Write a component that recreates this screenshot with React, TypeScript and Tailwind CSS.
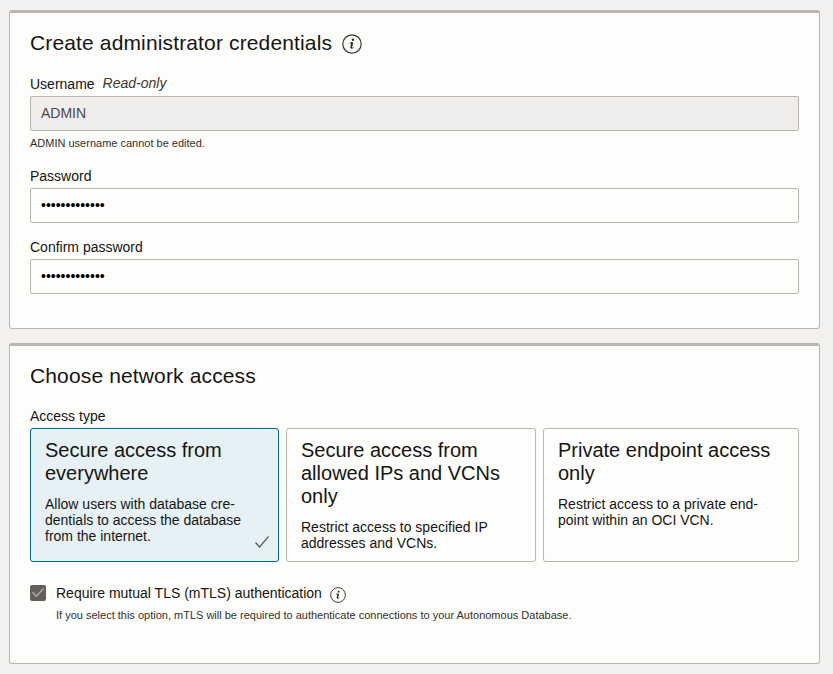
import React from "react";

function InfoIcon({ className }: { className: string }) {
  return (
    <svg viewBox="0 0 20 20" className={className} fill="none">
      <circle cx="10" cy="10" r="9.2" stroke="#3a3735" strokeWidth="1.2" />
      <circle cx="10.9" cy="5.8" r="1.2" fill="#2b2826" />
      <path d="M7.8 9.1 L10.4 8.6 L9.2 13.6 C9 14.8 10 14.7 11.6 13.2" stroke="#2b2826" strokeWidth="1" />
      <path d="M10.2 8.5 L9.1 13.8" stroke="#2b2826" strokeWidth="1.7" />
    </svg>
  );
}

function Panel({ className, children }: { className: string; children: React.ReactNode }) {
  return (
    <section
      className={`rounded-[3px] border border-t-[3px] border-[#bbb5af] bg-[#fdfdfb] pl-5 pr-5 ${className}`}
    >
      {children}
    </section>
  );
}

function PasswordField({ label, className }: { label: string; className: string }) {
  return (
    <div className={className}>
      <div className="h-5 text-sm leading-4">{label}</div>
      <div className="h-[35px] rounded-[2px] border border-[#bbb5af] pl-2.5 pt-2 text-sm leading-4 text-black">
        •••••••••••••
      </div>
    </div>
  );
}

function Card({
  title,
  lines,
  selected = false,
}: {
  title: string[];
  lines: string[];
  selected?: boolean;
}) {
  return (
    <div
      className={`relative rounded-[3px] border pl-3.5 pt-2.5 ${
        selected ? "border-[#00688c] bg-[#e5f1f4]" : "border-[#bbb5af]"
      }`}
    >
      <div className="text-xl leading-[23px]">
        {title.map((t) => (
          <div key={t} className="whitespace-nowrap">{t}</div>
        ))}
      </div>
      <div className="mt-[11px] text-sm leading-4">
        {lines.map((t) => (
          <div key={t} className="whitespace-nowrap">{t}</div>
        ))}
      </div>
      {selected && (
        <svg viewBox="0 0 16 14" className="absolute bottom-3 right-2 h-3.5 w-4" fill="none">
          <path d="M1.5 7.5 L5.6 12 L14.6 1.4" stroke="#55524f" strokeWidth="1.2" />
        </svg>
      )}
    </div>
  );
}

export default function App() {
  return (
    <main className="h-[674px] w-[833px] overflow-hidden bg-[#f2f1ef] pl-[9px] pt-2.5 font-['Liberation_Sans',Arial,sans-serif] text-[#161513]">
      <Panel className="h-[319px] w-[811px] pt-[18px]">
        <div className="flex h-6 items-center">
          <h2 className="text-[21px] leading-6 tracking-[0.14px]">Create administrator credentials</h2>
          <InfoIcon className="ml-2.5 mt-px h-5 w-5" />
        </div>
        <div className="mt-[21px] flex h-5 text-sm leading-4">
          <span>Username</span>
          <span className="-mt-px ml-2 italic text-[#3c3835]">Read-only</span>
        </div>
        <div className="h-[35px] rounded-[2px] border border-[#bbb5af] bg-[#f0eeed] pl-2.5 pt-2 text-sm leading-4 text-[#4b4744]">
          ADMIN
        </div>
        <div className="mt-1.5 text-[11px] leading-3 text-[#34312e]">ADMIN username cannot be edited.</div>
        <PasswordField label="Password" className="mt-[19px]" />
        <PasswordField label="Confirm password" className="mt-4" />
      </Panel>

      <Panel className="mt-3.5 h-[321px] w-[811px] pt-[18px]">
        <h2 className="text-[21px] leading-6 tracking-[0.14px]">Choose network access</h2>
        <div className="mt-5 h-5 text-sm leading-4">Access type</div>
        <div className="grid h-[134px] grid-cols-[249px_250px_256px] gap-[7px]">
          <Card
            selected
            title={["Secure access from", "everywhere"]}
            lines={["Allow users with database cre-", "dentials to access the database", "from the internet."]}
          />
          <Card
            title={["Secure access from", "allowed IPs and VCNs", "only"]}
            lines={["Restrict access to specified IP", "addresses and VCNs."]}
          />
          <Card
            title={["Private endpoint access", "only"]}
            lines={["Restrict access to a private end-", "point within an OCI VCN."]}
          />
        </div>
        <div className="mt-[23px] flex h-4">
          <span className="flex h-4 w-4 items-center justify-center rounded-[2px] bg-[#655f5c]">
            <svg viewBox="0 0 16 16" className="h-4 w-4" fill="none">
              <path d="M2.5 7.3 L6.3 11.2 L13.5 3.5" stroke="#b5b1ae" strokeWidth="1.3" />
            </svg>
          </span>
          <span className="ml-2.5 text-sm leading-4">Require mutual TLS (mTLS) authentication</span>
          <InfoIcon className="ml-2 mt-0.5 h-4 w-4" />
        </div>
        <div className="ml-[26px] mt-2 text-[11px] leading-3 text-[#34312e]">
          If you select this option, mTLS will be required to authenticate connections to your Autonomous Database.
        </div>
      </Panel>
    </main>
  );
}
